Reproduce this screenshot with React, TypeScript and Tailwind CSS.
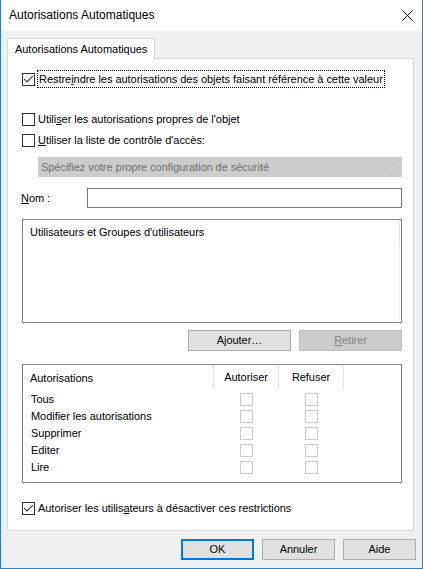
import React from "react";

function CheckBox({ checked = false, disabled = false }: { checked?: boolean; disabled?: boolean }) {
  return (
    <div
      className={
        disabled
          ? "w-[13px] h-[13px] shrink-0 border border-[#cccccc] bg-white"
          : "w-[13px] h-[13px] shrink-0 border border-[#333333] bg-white flex items-center justify-center"
      }
    >
      {checked && (
        <svg width="11" height="11" viewBox="0 0 11 11">
          <path d="M1.2 5.2 L4 8 L9.8 2.2" fill="none" stroke="#333333" strokeWidth="1.1" />
        </svg>
      )}
    </div>
  );
}

function Btn({
  children,
  w,
  kind = "normal",
}: {
  children: React.ReactNode;
  w: string;
  kind?: "normal" | "default" | "disabled";
}) {
  const base = "h-[21px] flex items-center justify-center shrink-0 " + w + " ";
  const cls =
    kind === "default"
      ? "border-2 border-[#0078d7] bg-[#e1e1e1] text-black"
      : kind === "disabled"
      ? "border border-[#bfbfbf] bg-[#cccccc] text-[#838383]"
      : "border border-[#adadad] bg-[#e1e1e1] text-black";
  return <div className={base + cls}>{children}</div>;
}

const rows = ["Tous", "Modifier les autorisations", "Supprimer", "Editer", "Lire"];

export default function App() {
  return (
    <div className="w-[423px] h-[569px] flex flex-col border-x border-b border-[#1883d7] bg-white text-black text-[11px] leading-[15px] tracking-[-0.04px] font-['Liberation_Sans',Arial,sans-serif]">
      {/* Title bar */}
      <div className="h-[31px] shrink-0 flex items-center justify-between bg-white pl-[8px] pr-[9px]">
        <span className="text-[12px] tracking-normal">Autorisations Automatiques</span>
        <svg width="11" height="11" viewBox="0 0 11 11">
          <path d="M0.5 0.5 L10.5 10.5 M10.5 0.5 L0.5 10.5" stroke="#000" strokeWidth="1" />
        </svg>
      </div>

      {/* Body */}
      <div className="flex-1 flex flex-col bg-[#f0f0f0] pl-[6px]">
        {/* Tab */}
        <div className="mt-[7px] flex">
          <div className="relative z-10 -mb-px h-[21px] w-[148px] flex items-center pl-[7px] bg-white border-t border-x border-[#d9d9d9]">
            Autorisations Automatiques
          </div>
        </div>

        {/* Panel */}
        <div className="w-[407px] h-[473px] border border-[#d9d9d9] bg-white flex flex-col pl-[14px] pr-[11px]">
          {/* Row 1 */}
          <div className="mt-[11px] h-[18px] flex items-center">
            <CheckBox checked />
            <span className="ml-[2px] h-[18px] flex items-center border border-dotted border-black px-[1px]">
              Restre<u>i</u>ndre les autorisations des objets faisant référence à cette valeur
            </span>
          </div>

          {/* Row 2 */}
          <div className="mt-[23px] h-[17px] flex items-center">
            <CheckBox />
            <span className="ml-[3px]">
              Utili<u>s</u>er les autorisations propres de l'objet
            </span>
          </div>

          {/* Row 3 */}
          <div className="mt-[4px] h-[17px] flex items-center">
            <CheckBox />
            <span className="ml-[3px]">
              <u>U</u>tiliser la liste de contrôle d'accès:
            </span>
          </div>

          {/* Dropdown */}
          <div className="mt-[8px] ml-[16px] h-[20px] flex items-center justify-between bg-[#cccccc] border border-[#cccccc] pl-[2px] pr-[6px] text-[#6d6d6d]">
            <span>Spécifiez votre propre configuration de sécurité</span>
            <svg width="9" height="5" viewBox="0 0 9 5">
              <path d="M0.5 0.5 L4.5 4.5 L8.5 0.5" fill="none" stroke="#e4e4e4" strokeWidth="1" />
            </svg>
          </div>

          {/* Nom */}
          <div className="mt-[11px] h-[20px] flex items-center">
            <span className="w-[66px] -ml-px">
              <u>N</u>om :
            </span>
            <div className="flex-1 h-[20px] border border-[#7a7a7a] bg-white" />
          </div>

          {/* List box */}
          <div className="relative mt-[11px] h-[104px] border border-[#828790] bg-white pl-[7px] pt-[5px]">
            <span>Utilisateurs et Groupes d'utilisateurs</span>
            <div className="absolute right-[1px] top-0 w-px h-[25px] bg-[#e3e3e3]" />
            <div className="absolute right-[1px] top-[25px] bottom-0 w-px bg-[#f3f3f3]" />
          </div>

          {/* Ajouter / Retirer */}
          <div className="mt-[7px] flex justify-end gap-[8px]">
            <Btn w="w-[103px]">
              A<u>j</u>outer…
            </Btn>
            <Btn w="w-[103px]" kind="disabled">
              <u>R</u>etirer
            </Btn>
          </div>

          {/* Table */}
          <div className="mt-[13px] h-[119px] border border-[#828790] bg-white flex flex-col">
            <div className="h-[26px] flex items-start">
              <div className="w-[190px] h-[26px] flex items-center pl-[7px]">Autorisations</div>
              <div className="w-[65px] h-[24px] border-l border-[#e5e5e5] flex items-center justify-center">
                Autoriser
              </div>
              <div className="w-[65px] h-[24px] border-l border-[#e5e5e5] flex items-center justify-center">
                Refuser
              </div>
              <div className="flex-1 h-[24px] border-l border-[#e5e5e5]" />
            </div>
            {rows.map((r) => (
              <div key={r} className="h-[17px] flex items-center">
                <div className="w-[190px] pl-[8px]">{r}</div>
                <div className="w-[65px] pl-px flex justify-center">
                  <CheckBox disabled />
                </div>
                <div className="w-[65px] pl-px flex justify-center">
                  <CheckBox disabled />
                </div>
              </div>
            ))}
          </div>

          {/* Bottom checkbox */}
          <div className="mt-[17px] h-[17px] flex items-center">
            <CheckBox checked />
            <span className="ml-[3px]">
              Autoriser les utilis<u>a</u>teurs à désactiver ces restrictions
            </span>
          </div>
        </div>

        {/* Footer buttons */}
        <div className="mt-[8px] flex justify-end gap-[8px] pr-[6px]">
          <Btn w="w-[73px]" kind="default">
            OK
          </Btn>
          <Btn w="w-[73px]">Annuler</Btn>
          <Btn w="w-[73px]">Aide</Btn>
        </div>
      </div>
    </div>
  );
}
